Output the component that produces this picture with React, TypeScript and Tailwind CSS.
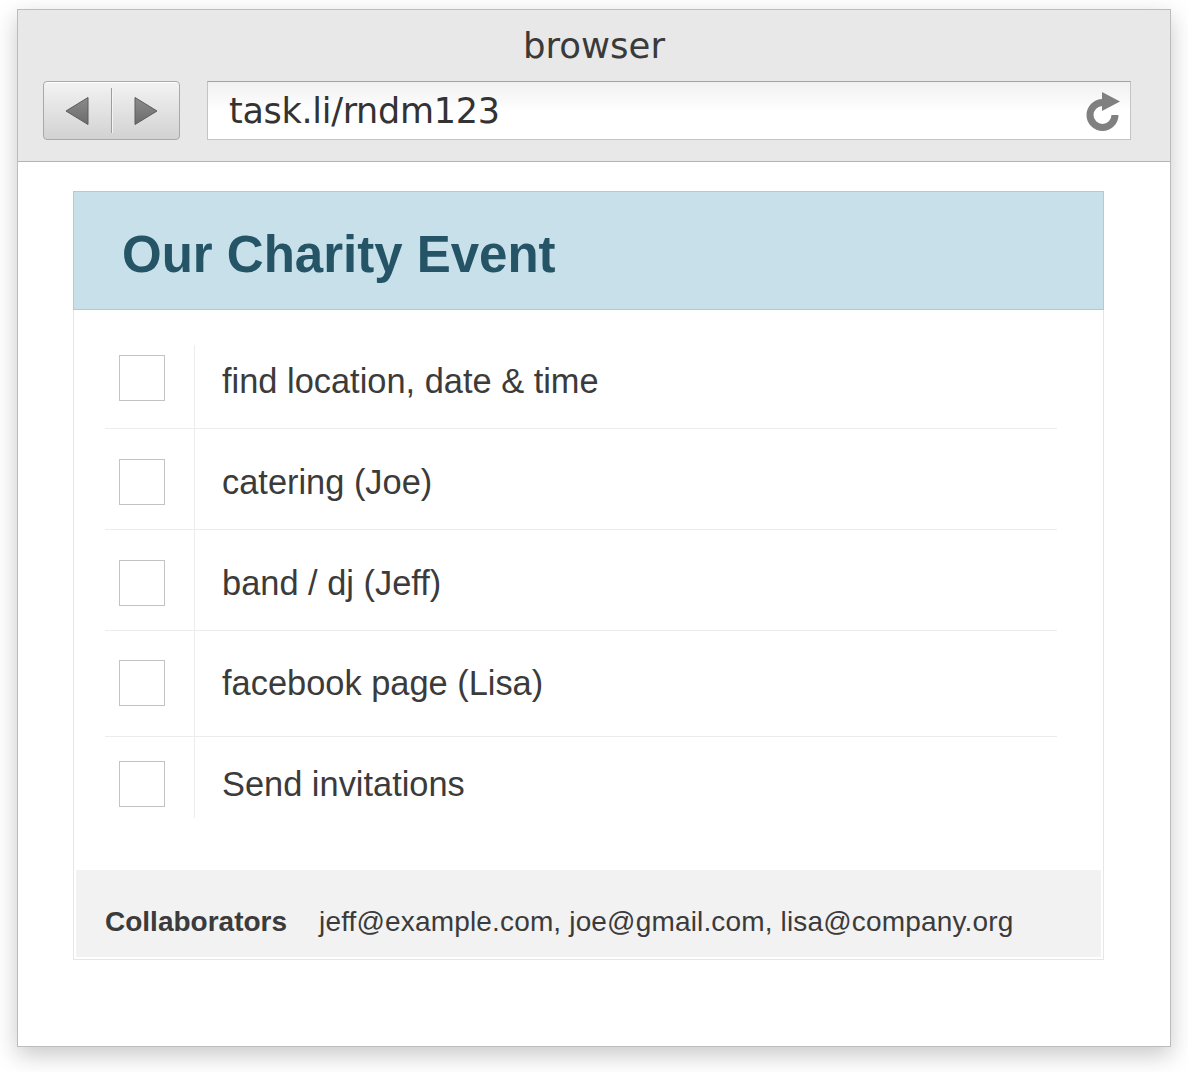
import React from "react";

const tasks = [
  { text: "find location, date & time", pad: "pt-[10px] pb-[27px]", shift: "mt-[6px]" },
  { text: "catering (Joe)", pad: "pt-[30px] pb-[24px]", shift: "mt-[3px]" },
  { text: "band / dj (Jeff)", pad: "pt-[30px] pb-[24px]", shift: "mt-[3px]" },
  { text: "facebook page (Lisa)", pad: "pt-[29px] pb-[30px]", shift: "mt-[3px]" },
  { text: "Send invitations", pad: "pt-[24px] pb-[11px]", shift: "mt-[3px]" },
];

const NavButton = () => (
  <div className="flex w-[137px] h-[59px] rounded-[4px] border border-[#a9a9a9] bg-gradient-to-b from-[#f3f3f3] to-[#d2d2d2] shadow-[inset_0_1px_0_rgba(255,255,255,0.8)]">
    <div className="flex-1 flex items-center justify-center">
      <svg width="24" height="30" viewBox="0 0 24 30">
        <defs>
          <linearGradient id="tri" x1="0" y1="0" x2="0" y2="1">
            <stop offset="0" stopColor="#8c8c8c" />
            <stop offset="1" stopColor="#6b6b6b" />
          </linearGradient>
        </defs>
        <polygon points="1,15 23,1.5 23,28.5" fill="url(#tri)" stroke="#5c5c5c" strokeWidth="1" />
      </svg>
    </div>
    <div className="self-center w-[2px] h-[45px] border-l border-[#9d9d9d] border-r border-r-[#f4f4f4]" />
    <div className="flex-1 flex items-center justify-center">
      <svg width="24" height="30" viewBox="0 0 24 30">
        <polygon points="1,1.5 23,15 1,28.5" fill="url(#tri)" stroke="#5c5c5c" strokeWidth="1" />
      </svg>
    </div>
  </div>
);

const Reload = () => (
  <svg width="34" height="40" viewBox="0 0 34 40">
    <path d="M16.5 11.5 A12.5 12.5 0 1 0 29 24" fill="none" stroke="#808080" strokeWidth="7" />
    <polygon points="16,1 34,10.5 16,20" fill="#808080" />
  </svg>
);

const App = () => {
  return (
    <div className="w-[1188px] h-[1072px] bg-white pl-[17px] pt-[9px]">
      <div className="w-[1154px] h-[1038px] border border-[#bcbcbc] bg-white shadow-[0_8px_22px_rgba(0,0,0,0.22)] flex flex-col">
        <div className="h-[152px] bg-[#e8e8e8] border-b border-[#b3b3b3] flex flex-col">
          <div
            className="pt-[16px] text-center text-[35.5px] leading-[40px] text-[#3a3a3a]"
            style={{ fontFamily: '"DejaVu Sans", sans-serif' }}
          >
            browser
          </div>
          <div className="mt-[15px] flex items-center pl-[25px]">
            <NavButton />
            <div className="ml-[27px] w-[924px] h-[59px] border border-[#c4c4c4] border-t-[#a3a3a3] bg-gradient-to-b from-[#f0f0f0] via-white to-white flex items-center pl-[21px] pr-[10px]">
              <span
                className="flex-1 text-[35px] leading-[40px] text-[#333] tracking-[-0.3px]"
                style={{ fontFamily: '"DejaVu Sans", sans-serif' }}
              >
                task.li/rndm123
              </span>
              <Reload />
            </div>
          </div>
        </div>

        <div
          className="ml-[55px] mt-[29px] w-[1031px] flex flex-col"
          style={{ fontFamily: '"Liberation Sans", Arial, sans-serif' }}
        >
          <div className="h-[119px] bg-[#c8e0ea] border border-[#a8cde0] flex items-center pl-[48px] pt-[8px]">
            <h1 className="text-[51px] font-bold text-[#245466] leading-none">Our Charity Event</h1>
          </div>
          <div className="border-x border-b border-[#e6e6e6] flex flex-col">
            <ul className="mt-[35px] ml-[31px] w-[952px]">
              {tasks.map((t, i) => (
                <li
                  key={t.text}
                  className={`flex ${i < tasks.length - 1 ? "border-b border-[#ececec]" : ""}`}
                >
                  <div className={`w-[90px] border-r border-[#ececec] pl-[14px] ${t.pad}`}>
                    <div className="w-[46px] h-[46px] border border-[#c3c3c3] bg-white" />
                  </div>
                  <div className={`pl-[27px] ${t.pad}`}>
                    <div className={`${t.shift} text-[34.4px] leading-[40px] text-[#3b3b3b]`}>{t.text}</div>
                  </div>
                </li>
              ))}
            </ul>
            <div className="mt-[52px] mx-[2px] mb-[2px] h-[87px] bg-[#f2f2f2] pl-[29px] pt-[36px] text-[28px] leading-[32px] text-[#3b3b3b] flex">
              <span className="font-bold">Collaborators</span>
              <span className="ml-[32px] tracking-[0.16px]">jeff@example.com, joe@gmail.com, lisa@company.org</span>
            </div>
          </div>
        </div>
      </div>
    </div>
  );
};

export default App;
